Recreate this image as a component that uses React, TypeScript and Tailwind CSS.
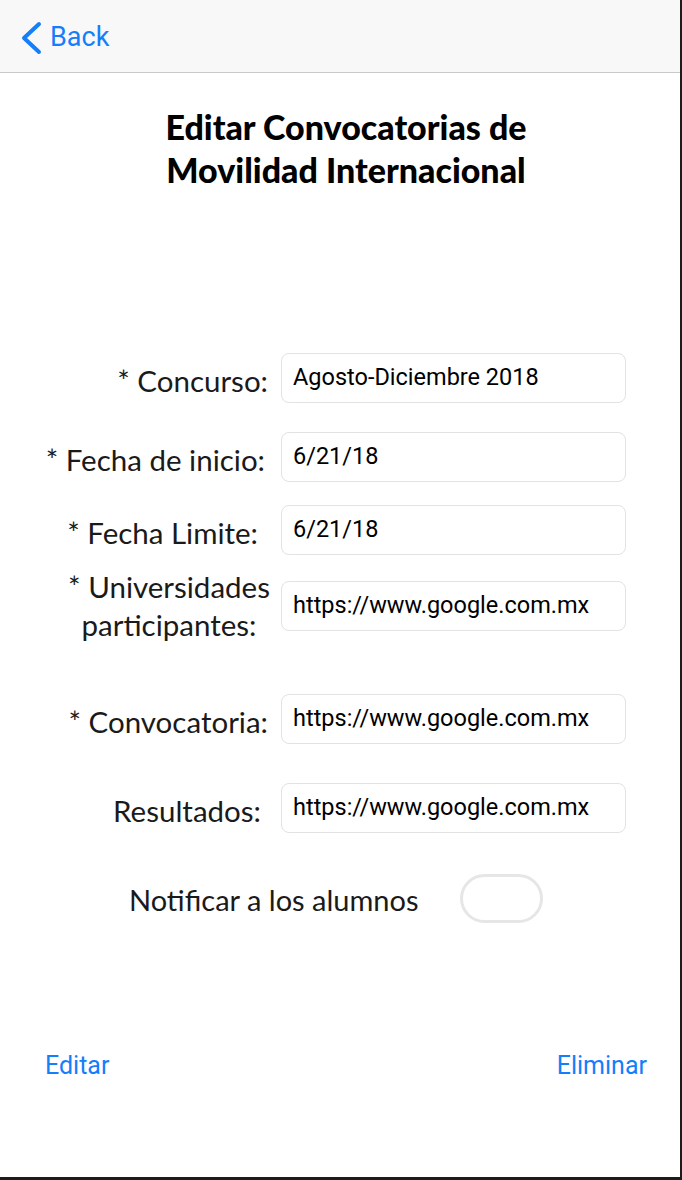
import React from "react";

const rows = [
  { label: ["* Concurso:"], value: "Agosto-Diciembre 2018", mt: "mt-[162px]", pr: "pr-[0px]" },
  { label: ["* Fecha de inicio:"], value: "6/21/18", mt: "mt-[29px]", pr: "pr-[3px]" },
  { label: ["* Fecha Limite:"], value: "6/21/18", mt: "mt-[23px]", pr: "pr-[10px]" },
  { label: ["* Universidades", "participantes:"], value: "https://www.google.com.mx", mt: "mt-[13px]", pr: "pr-[0px]" },
  { label: ["* Convocatoria:"], value: "https://www.google.com.mx", mt: "mt-[50px]", pr: "pr-[0px]" },
  { label: ["Resultados:"], value: "https://www.google.com.mx", mt: "mt-[39px]", pr: "pr-[7px]" },
];

export default function App() {
  return (
    <div className="w-[682px] h-[1180px] bg-white border-r-2 border-b-[3px] border-[#1c1c1c] flex flex-col">
      {/* Nav bar */}
      <div className="h-[73px] bg-[#f8f8f8] border-b border-[#c9c9cc] flex items-center pl-[20px] pt-[3px] shrink-0">
        <div className="flex items-center gap-[8px] text-[#147efb]">
          <svg width="22" height="34" viewBox="0 0 22 34" fill="none">
            <path d="M19 3 L4 17 L19 31" stroke="#147efb" strokeWidth="4" strokeLinecap="round" strokeLinejoin="round" />
          </svg>
          <span className="text-[27px] leading-none font-['Roboto',sans-serif]">Back</span>
        </div>
      </div>

      {/* Title */}
      <h1 className="mt-[32px] pl-[12px] text-center font-['Lato',sans-serif] font-black text-[34px] leading-[43px] text-black">
        Editar Convocatorias de
        <br />
        Movilidad Internacional
      </h1>

      {/* Form */}
      <div className="flex flex-col">
        {rows.map((r) => (
          <div key={r.value + r.label[0]} className={`flex items-center ${r.mt}`}>
            <div className={`w-[268px] shrink-0 text-right whitespace-nowrap ${r.pr} font-['Lato',sans-serif] text-[29.5px] leading-[38px] text-[#1a1a1a]`}>
              {r.label.length > 1 ? (
                <div className="flex flex-col items-center pl-[70px]">
                  {r.label.map((l) => (
                    <span key={l} className="whitespace-nowrap">{l}</span>
                  ))}
                </div>
              ) : (
                <span className="block pt-[6px]">{r.label[0]}</span>
              )}
            </div>
            <div className="ml-[13px] w-[345px] h-[50px] rounded-[8px] border border-[#e2e2e2] flex items-center pl-[11px] pb-[1px] font-['Roboto',sans-serif] text-[23.5px] text-black">
              {r.value}
            </div>
          </div>
        ))}

        {/* Notify switch */}
        <div className="flex items-center mt-[41px]">
          <span className="ml-[129px] pt-[2px] font-['Lato',sans-serif] text-[29px] text-[#1a1a1a]">Notificar a los alumnos</span>
          <div className="ml-[41px] w-[83px] h-[49px] rounded-full border-[3px] border-[#e6e6e6] bg-white" />
        </div>
      </div>

      {/* Bottom actions */}
      <div className="mt-[128px] flex justify-between pl-[45px] pr-[33px] font-['Roboto',sans-serif] text-[25px] leading-[30px] text-[#147efb]">
        <span>Editar</span>
        <span>Eliminar</span>
      </div>
    </div>
  );
}
